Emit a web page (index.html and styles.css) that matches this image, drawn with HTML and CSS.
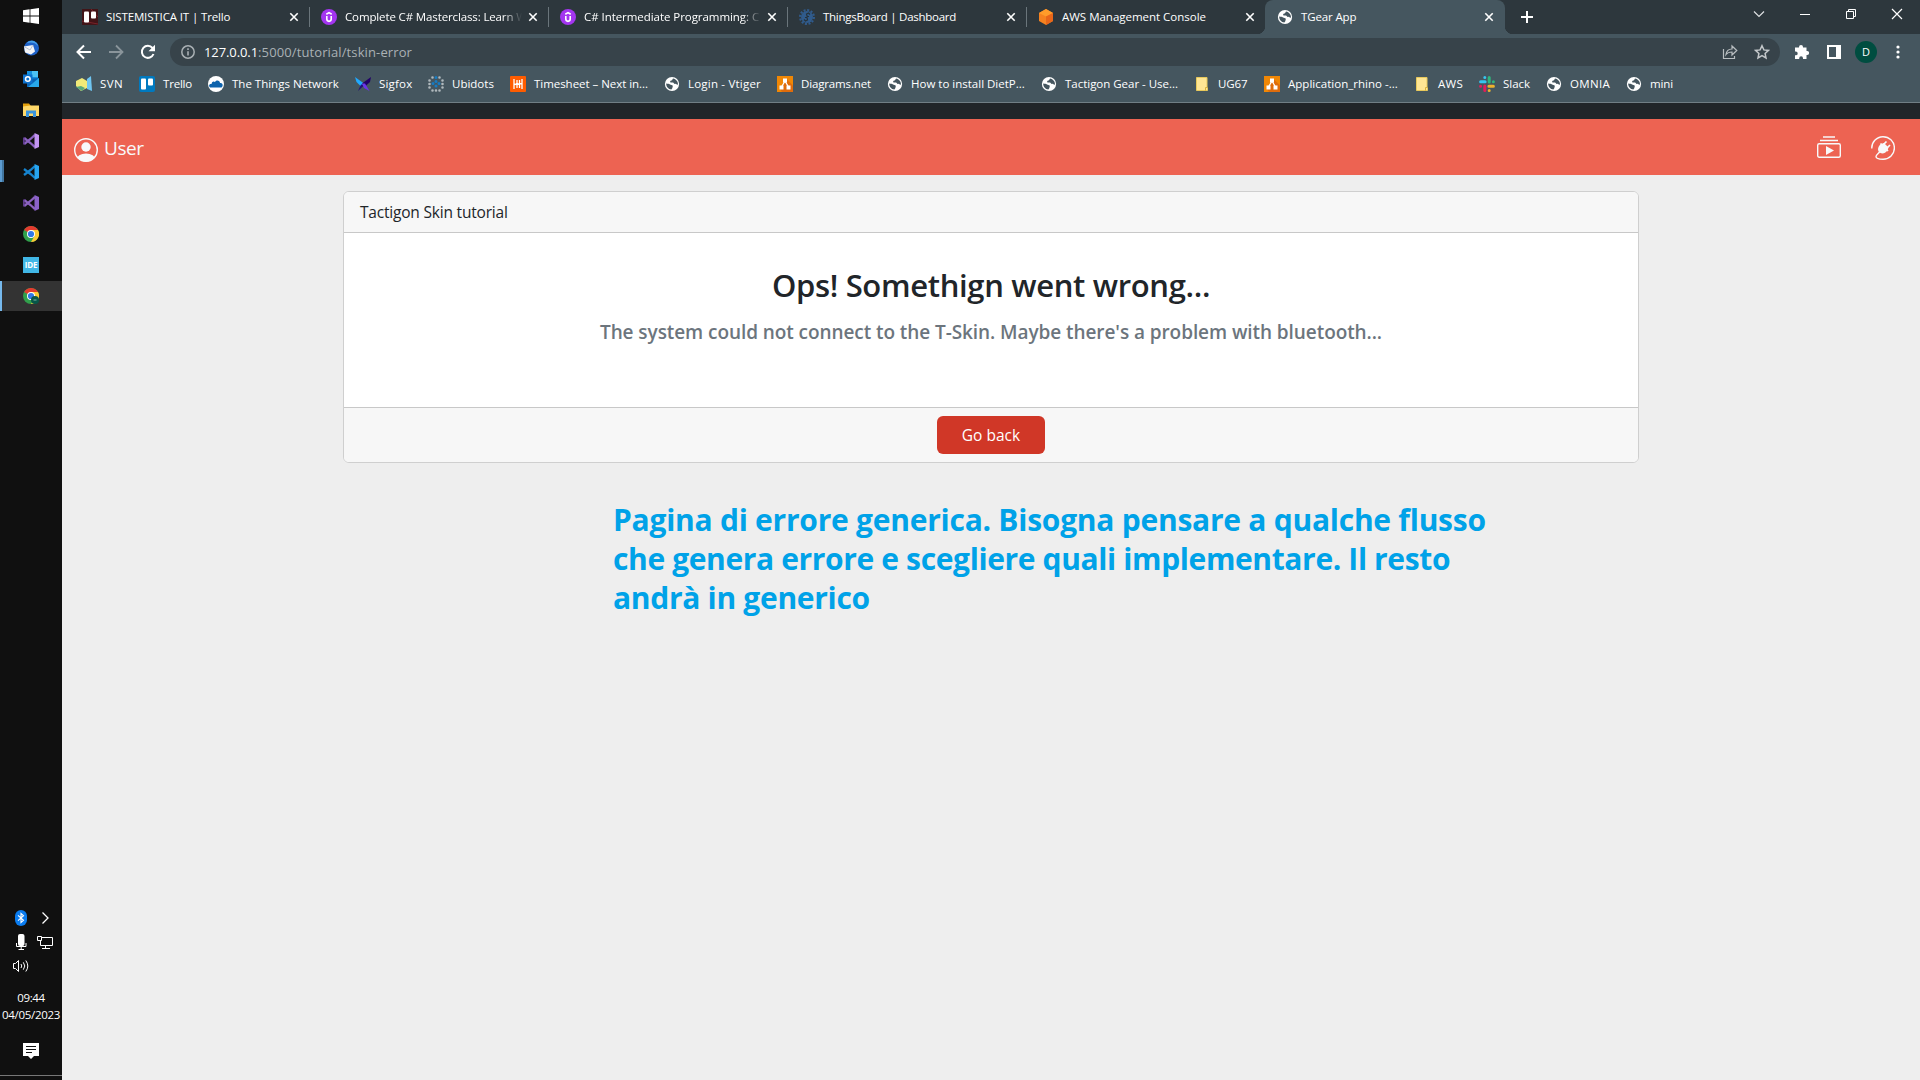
FILE: index.html
```html
<!DOCTYPE html>
<html lang="it">
<head>
<meta charset="utf-8">
<title>TGear App</title>
<link rel="stylesheet" href="styles.css">
</head>
<body>
<svg class="defs" aria-hidden="true">
  <symbol id="globe" viewBox="0 0 16 16"><circle cx="8" cy="8" r="7.1" fill="#fff"/><path d="M2.200 7.400c1.800.2 2.800.2 3.800 1.100.9.700 2 .3 2.600 1 .6.500-.2 1.500-.2 2.400l-1 1.500C4.200 13.200 2.100 10.500 2.200 7.400zM9 2.400 8 4.200l-1.900.7.3 1.500h2.700l1.500 1.500 1.400-.1 1 1 1-.2c.2-2.900-1.900-5.600-5-6.200z" fill="#45565f"/></symbol>
  <symbol id="udemy" viewBox="0 0 16 16"><circle cx="8" cy="8" r="8" fill="#a435f0"/><path d="M5.300 5.200 8 3.600l2.700 1.600M5.800 7v3.100c0 3 4.400 3 4.400 0V7" fill="none" stroke="#fff" stroke-width="1.600"/></symbol>
  <symbol id="diagram" viewBox="0 0 16 16"><path fill="#f08705" d="M0 0h16v16H0z"/><path fill="#df6c0c" d="m9.500 3 6.500 6.500V16H5l-2-3z"/><path d="m8 5-3.500 6M8 5l3.500 6" stroke="#fff" stroke-width="1.300"/><path d="M6 2.500h4v4H6zM2.500 9.500h4v4h-4zM9.500 9.500h4v4h-4z" fill="#fff"/></symbol>
  <symbol id="folder" viewBox="0 0 16 16"><path d="M2.500 1.500h10.500v10.500h.5v2.500h-11z" fill="#ffe694" stroke="#e8c95c"/><path d="M11.500 14.500v-3h2" fill="none" stroke="#d9b23e"/></symbol>
  <symbol id="vs" viewBox="0 0 16 16"><path d="m1.200 5 6.300 5L12 14.200M1.200 11 7.500 6 12 1.800" fill="none" stroke="#8b62c0" stroke-width="2.300"/><path d="M.9 4.500v7" stroke="#68419a" stroke-width="1.600"/></symbol>
  <symbol id="chrome" viewBox="0 0 16 16"><circle cx="8" cy="8" r="8" fill="#31a04c"/><path d="M8 8 1.100 4A8 8 0 0 1 15 4z" fill="#e33b2e"/><path d="M8 8V4h7a8 8 0 0 1-7 12l3.500-6z" fill="#fcc934"/><circle cx="8" cy="8" r="4" fill="#fff"/><circle cx="8" cy="8" r="3.100" fill="#3278e8"/></symbol>
  <symbol id="x" viewBox="0 0 10 10"><path d="m1.300 1.300 7.400 7.400m0-7.400L1.300 8.700" stroke="#fff" stroke-width="1.600"/></symbol>
</svg>

<aside class="taskbar">
  <nav class="apps">
    <span class="app"><svg viewBox="0 0 16 16"><path fill="#fff" d="M0 2.200 6.600 1.300v6.200H0zM7.400 1.200 16 0v7.500H7.400zM0 8.500h6.600v6.200L0 13.800zM7.400 8.500H16V16l-8.600-1.200z"/></svg></span>
    <span class="app"><svg viewBox="0 0 16 16"><circle cx="8.500" cy="8" r="7.500" fill="#1f62c8"/><path d="M4 3C7-1 14 1 15 6c-3-4-7-4-11-3z" fill="#47a1e8"/><path d="m1 6.500 9-1.500 2 6.500-4 3-6-2z" fill="#f4f5f8"/><path d="m1 6.500 6 3.500 3-5" fill="none" stroke="#b7c2d2"/></svg></span>
    <span class="app"><svg viewBox="0 0 16 16"><path fill="#1490df" d="M4 0h11v10H4z"/><path fill="#4cc3f5" d="M9 0h6v6H9z"/><path fill="#0a63b5" d="m4 8 12-1v9H4z"/><path fill="#28a8ea" d="m16 7-11 9h11z"/><path fill="#0d72cf" d="M0 3.500h9.500v9H0z"/><circle cx="4.800" cy="8" r="2.300" fill="none" stroke="#fff" stroke-width="1.500"/></svg></span>
    <span class="app"><svg viewBox="0 0 16 16"><path fill="#e4a00c" d="M0 1.500h6l1.500 2V6H0z"/><path fill="#ffd868" d="M0 4.500 7 3.500h9V14H0z"/><path fill="#3a94dc" d="M3 15V8.500h10V15h-3v-3.500H6V15z"/></svg></span>
    <span class="app"><svg viewBox="0 0 16 16"><use href="#vs"/><path d="M11.500 0 16 2v12l-4.500 2z" fill="#c394f2"/></svg></span>
    <span class="app running"><svg viewBox="0 0 16 16"><path d="m1 5 6.500 5 4.500 4M1 11l6.500-5L12 2" fill="none" stroke="#1684cf" stroke-width="2.300"/><path d="M11.500 0 16 2v12l-4.500 2z" fill="#27a5f0"/></svg></span>
    <span class="app"><svg viewBox="0 0 16 16"><use href="#vs"/><path d="M11.500 0 16 2v12l-4.500 2z" fill="#8b62c8"/></svg></span>
    <span class="app"><svg><use href="#chrome"/></svg></span>
    <span class="app"><span class="ide">IDE</span></span>
    <span class="app active"><svg viewBox="0 0 16 16"><use href="#chrome"/><circle cx="12" cy="12" r="4" fill="#075648"/><path d="M10.500 12h3" stroke="#7cb0a5"/></svg></span>
  </nav>
  <div class="tray">
    <svg viewBox="0 0 16 16"><rect x="2" width="12" height="16" rx="6" fill="#0a7cf0"/><path d="m5 5.300 5.500 5L8 12.500v-9l2.500 2.200L5 10.700" fill="none" stroke="#fff" stroke-width="1.100"/></svg>
    <svg viewBox="0 0 16 16"><path d="m5.500 2.500 5.500 5.500-5.500 5.500" fill="none" stroke="#fff" stroke-width="1.300"/></svg>
    <svg viewBox="0 0 16 16"><rect x="5" y="0" width="6.500" height="12" rx="2" fill="#fff"/><path d="M3.500 9v3.500h9.500V9M8.200 12.500v3M5.500 15.500h5.500" fill="none" stroke="#fff"/></svg>
    <svg viewBox="0 0 16 16"><path d="M5 3.500h10.500v8H3.500V7M8.500 11.500v3M5 14.500h8M.5 2.500h4v4h-4z" fill="none" stroke="#fff"/></svg>
    <svg viewBox="0 0 16 16"><path d="M.5 5.500h2l3-3v11l-3-3h-2zM8 6q1.500 2 0 4M10.300 4.300q3 3.700 0 7.400M12.800 2.500q4 5.500 0 11" fill="none" stroke="#fff"/></svg>
  </div>
  <div class="clock"><span>09:44</span><span>04/05/2023</span></div>
  <svg class="notify" viewBox="0 0 16 16"><path d="M0 0h16v13h-5l-3 3-3-3H0z" fill="#fff"/><path d="M3 3.500h10M3 6.500h10M3 9.500h6" stroke="#101010"/></svg>
  <div class="desktop-edge"></div>
</aside>

<div class="browser">
  <header class="tabstrip">
    <div class="tab"><svg class="ic" viewBox="0 0 16 16"><path fill="#421417" d="M0 0h16v16H0z"/><path d="M0 12 16 15M9 0l7 8" stroke="#79232a"/><rect x="2" y="2.500" width="5" height="11" rx="1" fill="#fff"/><rect x="9" y="2.500" width="5" height="7" rx="1" fill="#fff"/></svg><span class="title">SISTEMISTICA IT | Trello</span><svg class="close"><use href="#x"/></svg></div>
    <div class="tab"><svg class="ic"><use href="#udemy"/></svg><span class="title fade">Complete C# Masterclass: Learn W</span><svg class="close"><use href="#x"/></svg></div>
    <div class="tab"><svg class="ic"><use href="#udemy"/></svg><span class="title fade">C# Intermediate Programming: C</span><svg class="close"><use href="#x"/></svg></div>
    <div class="tab"><svg class="ic" viewBox="0 0 16 16"><circle cx="8" cy="8" r="6.900" fill="none" stroke="#305b8c" stroke-width="2.200" stroke-dasharray="2 1.610"/><circle cx="8" cy="8" r="6" fill="#305b8c"/><path d="m5 10.500 1.500 1.500 2-1-.5-2.500h-2M11 5.500 9.500 4l-2 1 .7 2.500H10" fill="none" stroke="#26333b" stroke-width="1.200"/></svg><span class="title">ThingsBoard | Dashboard</span><svg class="close"><use href="#x"/></svg></div>
    <div class="tab"><svg class="ic" viewBox="0 0 16 16"><path d="m8 0 7 4v8l-7 4-7-4V4z" fill="#f58220"/><path d="m8 0 7 4-7 3.500L1 4z" fill="#ff9c2a"/><path d="m15 4-7 3.500V16l7-4z" fill="#e8661a"/></svg><span class="title">AWS Management Console</span><svg class="close"><use href="#x"/></svg></div>
    <div class="tab current"><svg class="ic"><use href="#globe"/></svg><span class="title">TGear App</span><svg class="close"><use href="#x"/></svg></div>
    <svg class="plus" viewBox="0 0 12 12"><path d="M6 0v12M0 6h12" stroke="#fff" stroke-width="2"/></svg>
    <div class="winctl">
      <svg viewBox="0 0 12 12"><path d="m1 3.500 5 5 5-5" fill="none" stroke="#dde0e2" stroke-width="1.200"/></svg>
      <svg viewBox="0 0 12 12"><path d="M1 6.500h10" stroke="#fff"/></svg>
      <svg viewBox="0 0 12 12"><path d="M1.500 3.500h7v7h-7zM3.500 3.500v-2h7v7h-2" fill="none" stroke="#fff"/></svg>
      <svg viewBox="0 0 12 12"><path d="m1 1 10 10m0-10L1 11" stroke="#fff" stroke-width="1.200"/></svg>
    </div>
  </header>
  <div class="toolbar">
    <svg class="nav" viewBox="0 0 16 16"><path d="M15 8H2M8 1.500 1.500 8 8 14.500" fill="none" stroke="#fff" stroke-width="2"/></svg>
    <svg class="nav" viewBox="0 0 16 16"><path d="M1 8h13M8 1.500 14.500 8 8 14.500" fill="none" stroke="#8a959b" stroke-width="1.800"/></svg>
    <svg class="nav" viewBox="0 0 16 16"><path d="M13.500 10A6 6 0 1 1 12.500 4l1.500 2" fill="none" stroke="#fff" stroke-width="2"/><path d="M15 .8v6.500H8.500z" fill="#fff"/></svg>
    <div class="omnibox">
      <svg class="info" viewBox="0 0 14 14"><circle cx="7" cy="7" r="6.200" fill="none" stroke="#a9b0b4" stroke-width="1.500"/><path d="M7 6.200v4.300M7 3.300v1.600" stroke="#a9b0b4" stroke-width="1.600"/></svg>
      <span class="url"><span class="host">127.0.0.1</span><span class="path">:5000/tutorial/tskin-error</span></span>
      <svg class="share" viewBox="0 0 16 16"><path d="M1.500 5v9.500h11V12" fill="none" stroke="#b8bdc0" stroke-width="1.200"/><path d="M4 10.500C4.500 6.500 7 5 10 5V2l4.800 4.500L10 11V8C7.500 8 5.500 8.500 4 10.500z" fill="none" stroke="#b8bdc0" stroke-width="1.200"/></svg>
      <svg class="star" viewBox="0 0 16 16"><path d="m8 1.700 1.900 4.200 4.600.5-3.400 3.100.9 4.500L8 11.700l-4 2.300.9-4.500L1.500 6.400l4.600-.5z" fill="none" stroke="#c3c7ca" stroke-width="1.500"/></svg>
    </div>
    <svg class="puzzle" viewBox="0 0 16 16"><path fill="#fff" d="M1 3.500h4V3a2 2 0 0 1 4 0v.5h3.500V7h.7a1.900 1.900 0 0 1 0 3.900h-.7V15H9v-.8a1.900 1.900 0 0 0-3.800 0v.8H1v-3.700h.8a1.900 1.900 0 0 0 0-3.800H1z"/></svg>
    <svg class="panel" viewBox="0 0 14 14"><path d="M1 1h12v12H1z" fill="none" stroke="#fff" stroke-width="2"/><path d="M9 1h5v12H9z" fill="#fff"/></svg>
    <span class="avatar">D</span>
    <svg class="dots" viewBox="0 0 4 14"><circle cx="2" cy="2" r="1.600" fill="#fff"/><circle cx="2" cy="7" r="1.600" fill="#fff"/><circle cx="2" cy="12" r="1.600" fill="#fff"/></svg>
  </div>
  <nav class="bookmarks">
    <a><svg viewBox="0 0 16 16"><path d="M0 5 6 2l5 3v7l-6 3-5-5z" fill="#f1ea78"/><path d="m11 3 4-3 1 15-5-2z" fill="#6fc6f2"/><path d="m0 11 5-1 4 2-3 3z" fill="#58a77c"/></svg><span>SVN</span></a>
    <a><svg viewBox="0 0 16 16"><rect width="16" height="16" rx="2" fill="#0079bf"/><rect x="2" y="2.500" width="5" height="11" rx="1" fill="#fff"/><rect x="9" y="2.500" width="5" height="7" rx="1" fill="#fff"/></svg><span>Trello</span></a>
    <a><svg viewBox="0 0 16 16"><circle cx="8" cy="8" r="8" fill="#fff"/><path d="M2 11.500C0 9 2 7.500 3.500 8 4 5 6 5 7 6c2-3 5-1 5 1 2-.5 4 2 1.500 4.500z" fill="#0d63ad"/></svg><span>The Things Network</span></a>
    <a><svg viewBox="0 0 16 16"><path d="m0 1 9 6.500L6 10.500 1.500 6z" fill="#20a9ff"/><path d="M16 1 7 7.500l3 3L15 6z" fill="#220068"/><path d="m6 8.500 4 0L3 15z" fill="#221077"/><path d="m7 7.500 3 0 4.500 7.500L9 12z" fill="#6a35e8"/></svg><span>Sigfox</span></a>
    <a><svg viewBox="0 0 16 16"><path d="M1.500 4.500h0M1.500 8h0M1.500 11.500h0M4.500 14.500h0M8 14.500h0M11.500 14.500h0M14.500 11.500h0M14.500 8h0M14.500 4.500h0M4.500 1.500h0M11.500 1.500h0" stroke="#b0b9bd" stroke-width="2.600" stroke-linecap="round"/><path d="M8 1.500h0M8 5.500h0M8 10h0M5 7.500h0M11 7.500h0" stroke="#167bc2" stroke-width="3" stroke-linecap="round"/></svg><span>Ubidots</span></a>
    <a><svg viewBox="0 0 16 16"><rect width="16" height="16" rx="1" fill="#ff5c00"/><path d="M4 3v10M7 4v8M12 3v10M9.500 4v8M4 8.500l8-1" stroke="#fff" stroke-width="1.300"/></svg><span>Timesheet – Next in...</span></a>
    <a><svg><use href="#globe"/></svg><span>Login - Vtiger</span></a>
    <a><svg><use href="#diagram"/></svg><span>Diagrams.net</span></a>
    <a><svg><use href="#globe"/></svg><span>How to install DietP...</span></a>
    <a><svg><use href="#globe"/></svg><span>Tactigon Gear - Use...</span></a>
    <a><svg><use href="#folder"/></svg><span>UG67</span></a>
    <a><svg><use href="#diagram"/></svg><span>Application_rhino -...</span></a>
    <a><svg><use href="#folder"/></svg><span>AWS</span></a>
    <a><svg viewBox="0 0 16 16"><g stroke-width="3" stroke-linecap="round"><path d="M1.600 5.700h4.500M5.800 1.500h0" stroke="#36c5f0"/><path d="M10.200 1.600v4.500M14.400 5.800h0" stroke="#2eb67d"/><path d="M14.400 10.200H9.900M10.200 14.400h0" stroke="#ecb22e"/><path d="M5.800 14.400V9.900M1.600 10.200h0" stroke="#e01e5a"/></g></svg><span>Slack</span></a>
    <a><svg><use href="#globe"/></svg><span>OMNIA</span></a>
    <a><svg><use href="#globe"/></svg><span>mini</span></a>
  </nav>

  <main class="page">
    <div class="topline"></div>
    <header class="appbar">
      <svg class="user-ic" viewBox="0 0 24 24"><clipPath id="uc"><circle cx="12" cy="12" r="11.500"/></clipPath><circle cx="12" cy="12" r="11.300" fill="none" stroke="#f8f9fa" stroke-width="1.400"/><circle cx="12" cy="9" r="4.700" fill="#f8f9fa"/><ellipse cx="12" cy="21.500" rx="9.500" ry="6" fill="#f8f9fa" clip-path="url(#uc)"/></svg>
      <span class="user">User</span>
      <svg class="play" viewBox="0 0 24 22"><path d="M6 1h12M3 4.500h18" stroke="#f8f9fa" stroke-width="1.400"/><rect x=".7" y="7.700" width="22.600" height="13.600" rx="1.500" fill="none" stroke="#f8f9fa" stroke-width="1.400"/><path d="M9 10v9l8-4.500z" fill="#f8f9fa"/></svg>
      <svg class="plug" viewBox="0 0 24 24"><path d="M.8 12.500A11.300 11.300 0 1 1 12 23.300c-3.500 0-7-1-7-2.800 0-1.500 1.800-2.500 4.500-5.500" fill="none" stroke="#f8f9fa" stroke-width="1.400"/><path d="m10 8 6.500 6.500c-2.500 3-5 3.500-7.500 2.300C6 15 6.500 10.500 10 8z" fill="#f8f9fa"/><path d="m9.500 7.500 7.500 7.500M12 9l3.500-3.500M15.500 12.500 19 9" stroke="#f8f9fa" stroke-width="1.700"/><path d="m10 8 3-1 4.500 4.500-1 3z" fill="#f8f9fa"/></svg>
    </header>
    <section class="card">
      <div class="card-head">Tactigon Skin tutorial</div>
      <div class="card-body">
        <h2>Ops! Somethign went wrong...</h2>
        <h5>The system could not connect to the T-Skin. Maybe there's a problem with bluetooth...</h5>
      </div>
      <div class="card-foot"><button>Go back</button></div>
    </section>
    <p class="note"><span>Pagina di errore generica. Bisogna pensare a qualche flusso</span><span>che genera errore e scegliere quali implementare. Il resto</span><span>andrà in generico</span></p>
  </main>
</div>
</body>
</html>
```
FILE: styles.css
```css
* { box-sizing: border-box; }
body { margin: 0; display: flex; width: 1920px; height: 1080px; overflow: hidden; background: #eee; font-family: "Open Sans", "Noto Sans", sans-serif; }
svg { display: block; flex: none; }
.defs { display: none; }

/* Windows taskbar */
.taskbar { width: 62px; height: 1080px; flex: none; display: flex; flex-direction: column; align-items: center; background: #101010; color: #fff; }
.apps { width: 62px; }
.app { display: flex; height: 31px; align-items: center; justify-content: center; border: 0 solid #76b9ed; }
.app:first-child { height: 32px; padding-bottom: 1px; }
.app svg { width: 16px; height: 16px; }
.app.active { background: #333; border-left-width: 2px; padding-right: 2px; height: 30px; margin-top: 1px; }
.app.running { background: linear-gradient(90deg, #5c9bd0 2px, #41759f 2px, #41759f 4px, transparent 4px) 0 4px / 4px 22px no-repeat; }
.ide { width: 16px; height: 16px; background: #41b7e6; color: #fff; font: bold 8px/16px "Open Sans", sans-serif; letter-spacing: -0.2px; text-align: center; }
.tray { display: grid; grid-template-columns: 16px 16px; gap: 8px; width: 40px; margin-top: 599px; margin-left: 4px; }
.tray svg { width: 16px; height: 16px; }
.clock { display: flex; flex-direction: column; align-items: center; margin-top: 15px; font-size: 11.5px; line-height: 17px; letter-spacing: -0.32px; }
.notify { width: 16px; height: 16px; margin-top: 20px; }
.desktop-edge { width: 62px; height: 1px; background: #777; margin-top: 16px; }

/* Browser tabs */
.browser { width: 1858px; display: flex; flex-direction: column; }
.tabstrip { display: flex; height: 34px; padding-left: 8px; align-items: center; background: #2d373d; color: #fff; font-size: 11.5px; }
.tab { position: relative; display: flex; align-items: center; width: 239px; height: 34px; padding: 0 10px 0 12px; }
.tab::after { content: ""; position: absolute; right: -1px; top: 7px; width: 1px; height: 20px; background: #6a757b; }
.tab:nth-child(5)::after, .tab.current::after { display: none; }
.ic { width: 16px; height: 16px; }
.title { width: 183px; margin-left: 8px; padding-bottom: 2px; white-space: nowrap; letter-spacing: -0.13px; }
.tab:nth-child(3) .title { letter-spacing: -0.055px; }
.tab:nth-child(4) .title { letter-spacing: -0.27px; }
.tab:nth-child(5) .title { letter-spacing: -0.013px; }
.fade { -webkit-mask-image: linear-gradient(90deg, #000 158px, transparent 177px); mask-image: linear-gradient(90deg, #000 158px, transparent 177px); }
.close { width: 10px; height: 10px; }
.current { width: 240px; background: #45565f; border-radius: 8px 8px 0 0; }
.current::before { content: ""; position: absolute; left: -8px; right: -8px; bottom: 0; height: 8px; background: radial-gradient(circle at 0 0, transparent 8px, #45565f 8.500px) 0 0 / 8px 8px no-repeat, radial-gradient(circle at 8px 0, transparent 8px, #45565f 8.500px) 100% 0 / 8px 8px no-repeat; }
.plus { width: 12px; height: 12px; margin-left: 16px; }
.winctl { display: flex; gap: 34px; margin-left: auto; margin-right: 17px; margin-top: -6px; }
.winctl svg { width: 12px; height: 12px; }

/* Address bar */
.toolbar { display: flex; align-items: center; height: 36px; background: #45565f; }
.nav { width: 16px; height: 16px; margin-left: 16px; }
.nav:first-child { margin-left: 14px; }
.omnibox { display: flex; align-items: center; width: 1610px; height: 28px; margin-left: 14px; padding-left: 11px; border-radius: 14px; background: #37434a; }
.info { width: 14px; height: 14px; }
.url { display: flex; margin-left: 9px; font-size: 13px; color: #aab1b5; }
.host { color: #fff; letter-spacing: -0.09px; }
.path { letter-spacing: 0.115px; }
.share { width: 16px; height: 16px; margin-left: auto; }
.star { width: 16px; height: 16px; margin: 0 10px 0 16px; }
.puzzle { width: 16px; height: 16px; margin-left: 14px; }
.panel { width: 14px; height: 14px; margin-left: 17px; }
.avatar { width: 22px; height: 22px; margin-left: 14px; border-radius: 50%; background: #004d40; color: #fff; font-size: 11px; line-height: 22px; text-align: center; }
.dots { width: 4px; height: 14px; margin-left: 19px; }

/* Bookmarks */
.bookmarks { display: flex; gap: 16px; height: 33px; padding: 0 14px 5px; align-items: center; background: #45565f; border-bottom: 1px solid #717e85; color: #fff; font-size: 11.5px; }
.bookmarks a { display: flex; gap: 8px; align-items: center; }
.bookmarks svg { width: 16px; height: 16px; }
.bookmarks span { white-space: nowrap; }
.bookmarks a:nth-child(1) span { width: 23px; letter-spacing: 0.39px; }
.bookmarks a:nth-child(2) span { width: 29px; letter-spacing: -0.2px; }
.bookmarks a:nth-child(3) span { width: 107px; }
.bookmarks a:nth-child(4) span { width: 33px; letter-spacing: 0.2px; }
.bookmarks a:nth-child(5) span { width: 42px; }
.bookmarks a:nth-child(6) span { width: 114px; letter-spacing: -0.04px; }
.bookmarks a:nth-child(7) span { width: 73px; letter-spacing: 0.21px; }
.bookmarks a:nth-child(8) span { width: 70px; letter-spacing: -0.145px; }
.bookmarks a:nth-child(9) span { width: 114px; }
.bookmarks a:nth-child(10) span { width: 113px; letter-spacing: -0.02px; }
.bookmarks a:nth-child(11) span { width: 30px; letter-spacing: -0.1px; }
.bookmarks a:nth-child(12) span { width: 110px; letter-spacing: 0.02px; }
.bookmarks a:nth-child(13) span { width: 25px; letter-spacing: 0.26px; }
.bookmarks a:nth-child(14) span { width: 27px; letter-spacing: -0.03px; }
.bookmarks a:nth-child(15) span { width: 40px; letter-spacing: 0.31px; }
.bookmarks a:nth-child(16) span { letter-spacing: -0.13px; }

/* Page content */
.page { flex: 1; display: flex; flex-direction: column; background: #eee; color: #212529; }
.topline { height: 16px; background: #212529; }
.appbar { display: flex; align-items: center; height: 56px; padding: 0 25px 0 12px; background: #ed6352; color: #f8f9fa; }
.user-ic { width: 24px; height: 24px; margin-top: 6px; }
.user { margin: 2px 0 0 6px; font-size: 19px; letter-spacing: -0.46px; }
.play { width: 24px; height: 22px; margin-left: auto; }
.plug { width: 24px; height: 24px; margin-left: 30px; margin-top: 2px; }
.card { width: 1296px; height: 272px; margin: 16px auto 0; border: 1px solid #cfcfcf; border-radius: 6px; background: #fff; overflow: hidden; }
.card-head { height: 41px; padding: 8px 16px; border-bottom: 1px solid #c8c8c8; background: #f7f7f7; font-size: 15.500px; line-height: 24px; letter-spacing: -0.2px; }
.card-body { height: 174px; padding-top: 33px; text-align: center; }
h2, h5 { margin: 0; font-weight: 600; }
h2 { font-size: 31px; line-height: 38px; letter-spacing: -0.33px; }
h5 { margin-top: 16px; font-size: 19px; line-height: 24px; letter-spacing: -0.074px; color: #6c757d; }
.card-foot { height: 55px; padding-top: 8px; border-top: 1px solid #c8c8c8; background: #f7f7f7; text-align: center; }
button { width: 108px; height: 38px; padding: 0; border: 0; border-radius: 6px; background: #d03727; color: #fff; font: 15.500px/38px "Open Sans", sans-serif; }
.note { display: flex; flex-direction: column; align-items: flex-start; margin: 37px 0 0 551px; color: #00a2e8; font-size: 30px; font-weight: 700; line-height: 39px; white-space: nowrap; letter-spacing: -0.25px; }
.note span:nth-child(2) { letter-spacing: -0.37px; }
.note span:nth-child(3) { letter-spacing: -0.3px; }
```
